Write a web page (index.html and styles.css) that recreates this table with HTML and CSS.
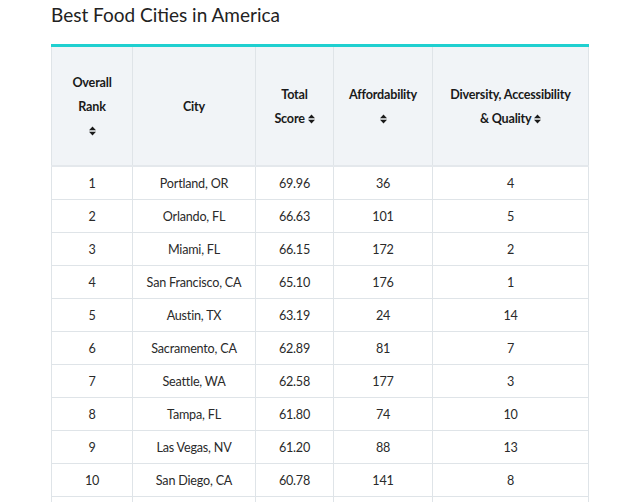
FILE: index.html
```html
<!DOCTYPE html>
<html>
<head>
<meta charset="utf-8">
<link rel="stylesheet" href="styles.css">
</head>
<body>
<div class="wrap">
  <h2 class="title">Best Food Cities in America</h2>
  <table class="rank">
    <thead>
      <tr>
        <th class="c1">Overall<br>Rank<br><svg class="sort" viewBox="0 0 7 10"><path d="M0 4.2 3.5 0.5 7 4.2Z M0 5.8 3.5 9.5 7 5.8Z"/></svg></th>
        <th class="c2">City</th>
        <th class="c3">Total<br>Score <svg class="sort" viewBox="0 0 7 10"><path d="M0 4.2 3.5 0.5 7 4.2Z M0 5.8 3.5 9.5 7 5.8Z"/></svg></th>
        <th class="c4">Affordability<br><svg class="sort" viewBox="0 0 7 10"><path d="M0 4.2 3.5 0.5 7 4.2Z M0 5.8 3.5 9.5 7 5.8Z"/></svg></th>
        <th class="c5">Diversity, Accessibility<br>&amp; Quality <svg class="sort" viewBox="0 0 7 10"><path d="M0 4.2 3.5 0.5 7 4.2Z M0 5.8 3.5 9.5 7 5.8Z"/></svg></th>
      </tr>
    </thead>
    <tbody>
      <tr><td>1</td><td>Portland, OR</td><td>69.96</td><td>36</td><td>4</td></tr>
      <tr><td>2</td><td>Orlando, FL</td><td>66.63</td><td>101</td><td>5</td></tr>
      <tr><td>3</td><td>Miami, FL</td><td>66.15</td><td>172</td><td>2</td></tr>
      <tr><td>4</td><td>San Francisco, CA</td><td>65.10</td><td>176</td><td>1</td></tr>
      <tr><td>5</td><td>Austin, TX</td><td>63.19</td><td>24</td><td>14</td></tr>
      <tr><td>6</td><td>Sacramento, CA</td><td>62.89</td><td>81</td><td>7</td></tr>
      <tr><td>7</td><td>Seattle, WA</td><td>62.58</td><td>177</td><td>3</td></tr>
      <tr><td>8</td><td>Tampa, FL</td><td>61.80</td><td>74</td><td>10</td></tr>
      <tr><td>9</td><td>Las Vegas, NV</td><td>61.20</td><td>88</td><td>13</td></tr>
      <tr><td>10</td><td>San Diego, CA</td><td>60.78</td><td>141</td><td>8</td></tr>
      <tr class="partial"><td></td><td></td><td></td><td></td><td></td></tr>
    </tbody>
  </table>
</div>
</body>
</html>
```
FILE: styles.css
```css
html, body {
  margin: 0;
  padding: 0;
  background: #ffffff;
}
.wrap {
  padding: 0 0 0 51px;
  font-family: Lato, "Liberation Sans", sans-serif;
}
.title {
  margin: 0;
  padding-top: 3px;
  height: 41px;
  font-size: 19px;
  font-weight: 400;
  color: #222222;
  line-height: 24px;
}
.rank {
  border-collapse: collapse;
  width: 532px;
  table-layout: fixed;
  border-top: 3px solid #1fd0d0;
}
.rank th {
  background: #f1f4f7;
  color: #1a1a1a;
  font-size: 12.6px;
  letter-spacing: -0.2px;
  font-weight: 700;
  line-height: 24px;
  height: 116px;
  padding: 2px 0 0;
  border: 1px solid #dfe4e8;
  border-top: none;
  border-bottom: 2px solid #e4e8ec;
  vertical-align: middle;
  text-align: center;
}
.c1 { width: 80px; }
.c2 { width: 122px; }
.c3 { width: 77px; }
.c4 { width: 98px; }
.c5 { width: 155px; }
.rank td {
  height: 32px;
  padding: 0;
  border: 1px solid #dfe4e8;
  text-align: center;
  vertical-align: middle;
  font-size: 12.6px;
  letter-spacing: -0.2px;
  color: #2a2a2a;
}
.sort {
  display: inline-block;
  width: 7px;
  height: 10px;
  vertical-align: -1px;
  fill: #1a1a1a;
}
```
